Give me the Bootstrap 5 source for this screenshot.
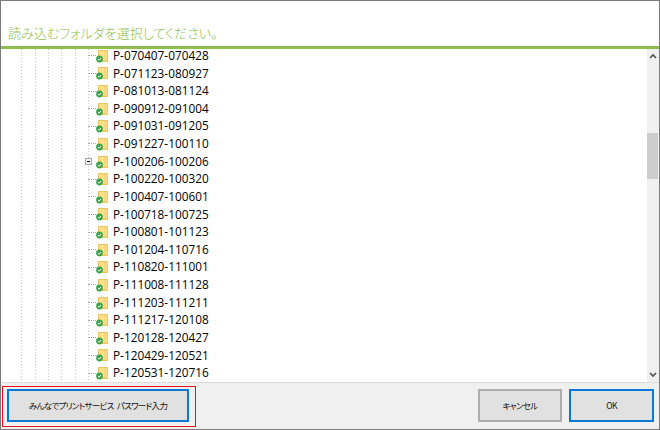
<!DOCTYPE html>
<html lang="ja"><head><meta charset="utf-8">
<link href="https://cdn.jsdelivr.net/npm/bootstrap@5.3.0/dist/css/bootstrap.min.css" rel="stylesheet">
<style>
html,body{margin:0;height:430px;overflow:hidden;background:#fff}
.win{width:660px;height:430px;border:1px solid #7a7a7a;font-family:"Open Sans","Noto Sans CJK JP",sans-serif}
.head{height:48px;flex:none;border-bottom:3px solid #8cc04b;color:#8cc04b;font-size:13px;letter-spacing:.05px;padding-left:7px;line-height:18px;padding-top:23px;font-family:"Noto Sans CJK JP",sans-serif;font-feature-settings:"palt";font-weight:300;white-space:nowrap}
.body-area{height:333px;flex:none}
.tree{
 background-image:repeating-linear-gradient(#c8c8c8 0 1px,transparent 1px 3px),repeating-linear-gradient(#c8c8c8 0 1px,transparent 1px 3px),repeating-linear-gradient(#c8c8c8 0 1px,transparent 1px 3px),repeating-linear-gradient(#c8c8c8 0 1px,transparent 1px 3px),repeating-linear-gradient(#c8c8c8 0 1px,transparent 1px 3px),repeating-linear-gradient(#c8c8c8 0 1px,transparent 1px 3px);
 background-size:1px 100%;background-repeat:no-repeat;background-position:20px 0,34px 0,47px 0,60px 0,74px 0,87px 0}
.tree-row{height:17.63px;display:flex;align-items:center;font-size:11.8px;line-height:1;color:#000;margin-left:87px}
.tree-row:first-child{margin-top:-2px}
.conn{width:8px;height:0;border-top:1px dotted #aaa;flex:none}
.ficon{width:14px;height:14px;flex:none;margin-right:4px;margin-left:-1px}
.exp{width:7px;height:7px;border:1px solid #a5a5a5;background:#f4f4f4;position:relative;flex:none;margin-left:-3px;margin-right:4px}
.exp::after{content:"";position:absolute;left:1px;right:1px;top:2px;height:1px;background:#000}
.sbar{width:12px;flex:none;background:#f0f0f0;position:relative}
.arrow{position:absolute;left:2px;width:8px;height:6px}
.thumb{position:absolute;left:0;right:1px;top:84px;height:46px;background:#cdcdcd}
.foot{height:47px;flex:none;background:#f0f0f0;border-top:1px solid #dcdcdc;padding:3px 5px 0 1px}
.fbtn{height:33px;background:#e1e1e1;border:2px solid #adadad;border-radius:0;font-size:8.5px;letter-spacing:-.7px;word-spacing:2px;color:#111;padding:0;font-family:"Noto Sans CJK JP",sans-serif;font-feature-settings:"palt";line-height:1;white-space:nowrap}
.fbtn.act{border-color:#0a78d7}
.hilite{border:1px solid #e8141c;width:194px;height:41px;display:flex;padding:2px 0 0 4px}
.hilite .fbtn{width:182px}
.b1{width:84px;margin:3px 7px 0 auto}.b2{width:85px;margin-top:3px}
</style></head><body>
<div class="win d-flex flex-column">
<div class="head">読み込むフォルダを選択してください。</div>
<div class="body-area d-flex">
<div class="tree flex-grow-1" id="t"></div>
<div class="sbar">
<svg class="arrow" style="top:4px" viewBox="0 0 8 6"><path d="M1 5L4 2L7 5" fill="none" stroke="#505050" stroke-width="1.6"/></svg>
<div class="thumb"></div>
<svg class="arrow" style="bottom:4px" viewBox="0 0 8 6"><path d="M1 1L4 4L7 1" fill="none" stroke="#505050" stroke-width="1.6"/></svg>
</div>
</div>
<div class="foot d-flex align-items-start">
<div class="hilite"><button class="btn fbtn act">みんなでプリントサービス パスワード入力</button></div>
<button class="btn fbtn b1">キャンセル</button>
<button class="btn fbtn act b2">OK</button>
</div>
</div>
<script>
var n="070407-070428 071123-080927 081013-081124 090912-091004 091031-091205 091227-100110 100206-100206 100220-100320 100407-100601 100718-100725 100801-101123 101204-110716 110820-111001 111008-111128 111203-111211 111217-120108 120128-120427 120429-120521 120531-120716".split(" ");
var ic='<svg class="ficon" viewBox="0 0 14 14"><path d="M3.5 1.5H12.5V12.5H3.5Z" fill="#fde08a" stroke="#eac35c"/><path d="M10 2V12" stroke="#f4cf6e"/><circle cx="4.5" cy="10" r="3.4" fill="#3aa648"/><path d="M3 10L4.2 11.2L6 9" fill="none" stroke="#fff" stroke-width="1"/></svg>';
document.getElementById("t").innerHTML=n.map(function(x,i){return '<div class="tree-row">'+(i==6?'<span class="exp"></span>':'<span class="conn"></span>')+ic+'<span>P-'+x+'</span></div>'}).join("");
</script>
</body></html>
